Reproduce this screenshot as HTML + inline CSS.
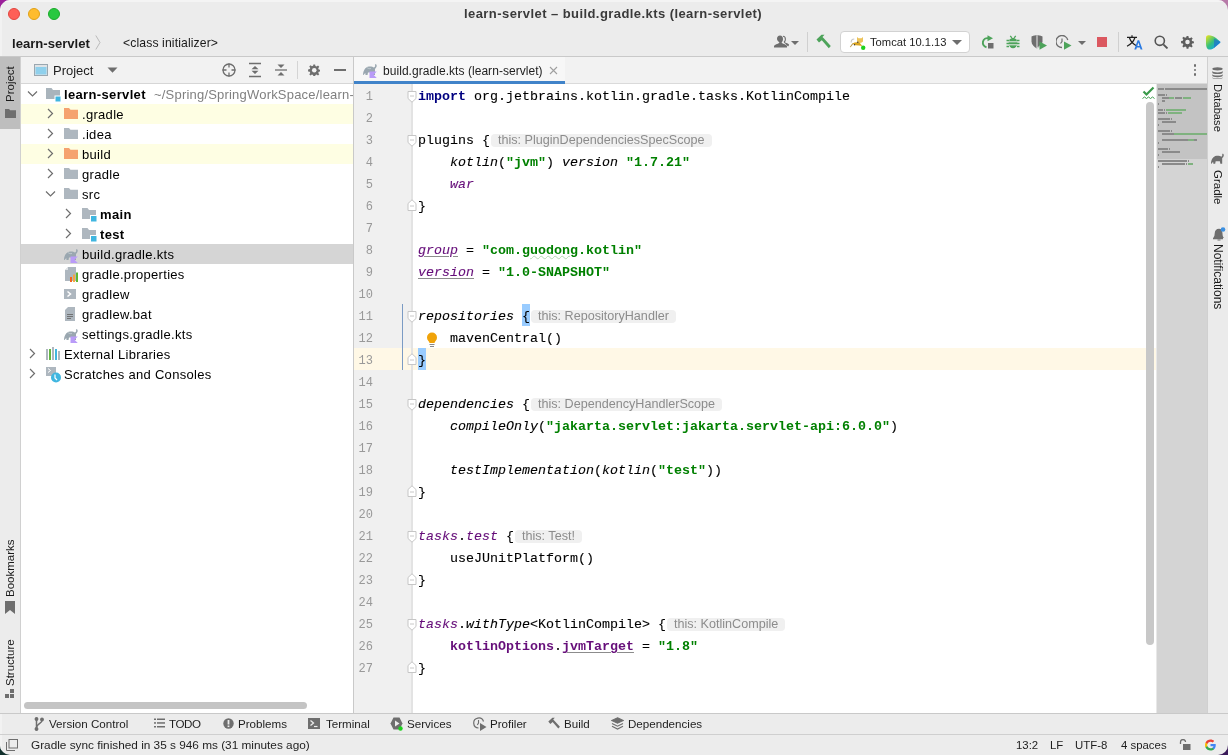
<!DOCTYPE html>
<html><head><meta charset="utf-8">
<style>
*{margin:0;padding:0;box-sizing:border-box}
html,body{width:1228px;height:755px;overflow:hidden;background:#7a2a7a}
body{font-family:"Liberation Sans",sans-serif;color:#000;position:relative}
.a{position:absolute}
#win{position:absolute;left:0;top:0;width:1228px;height:755px;background:#ececec;border-radius:10px;overflow:hidden;will-change:transform}
.t{position:absolute;white-space:pre;line-height:1}
.mono{font-family:"Liberation Mono",monospace}
/* editor code */
.ln{position:absolute;left:354px;width:19px;text-align:right;font-family:"Liberation Mono",monospace;font-size:12px;color:#999;white-space:pre;line-height:22px;height:22px;padding-top:2px}
.cl{position:absolute;left:418px;-webkit-text-stroke:0.1px currentColor;font-family:"Liberation Mono",monospace;font-size:13.33px;white-space:pre;color:#000;height:22px;line-height:22px;padding-top:2px}
.b{font-weight:bold}.str,.kw,.b{-webkit-text-stroke:0}.ul{text-decoration:underline;text-decoration-color:#8c8c8c;text-underline-offset:2px}.br{background:#99ccff;display:inline-block;height:22px;margin-top:-2px;padding-top:2px;vertical-align:top}
.wavy{text-decoration:underline wavy #b5d9b5;text-decoration-thickness:1px}
.kw{color:#000080;font-weight:bold}
.str{color:#008000;font-weight:bold}
.it{font-style:italic}
.pu{color:#660e7a}
.hint{display:inline-block;-webkit-text-stroke:0;font-family:"Liberation Sans",sans-serif;font-size:12.6px;color:#8c8c8c;font-weight:normal;font-style:normal;background:#f0f0f0;border-radius:4px;padding:0 7px 0 7px;line-height:13px;height:13px;vertical-align:0.5px;margin-left:1px}
.row{position:absolute;left:21px;width:332px;height:20px}
.tx{position:absolute;font-size:13px;white-space:pre;line-height:14px;margin-top:1px}
</style></head><body>
<div class="a" style="left:0;top:0;width:30px;height:30px;background:#9a1f9a"></div><div class="a" style="right:0;top:0;width:30px;height:30px;background:#b77aa8"></div><div class="a" style="left:0;bottom:0;width:30px;height:30px;background:#10302c"></div><div class="a" style="right:0;bottom:0;width:30px;height:30px;background:#3a1a5a"></div>
<div id="win">
<!-- title bar -->
<div class="a" style="left:0;top:0;width:1228px;height:1.5px;background:#f4f4f4"></div>
<div class="a" style="left:0;top:0;width:1.5px;height:755px;background:#f2f2f2"></div>
<div class="a" style="left:8px;top:8px;width:12px;height:12px;border-radius:50%;background:#fe5f57;border:0.5px solid #e2463f"></div>
<div class="a" style="left:28px;top:8px;width:12px;height:12px;border-radius:50%;background:#febc2e;border:0.5px solid #e1a116"></div>
<div class="a" style="left:48px;top:8px;width:12px;height:12px;border-radius:50%;background:#28c840;border:0.5px solid #1aab29"></div>
<div class="t" style="left:464px;top:7px;font-size:13px;letter-spacing:0.43px;font-weight:bold;color:#3a3a3a">learn-servlet – build.gradle.kts (learn-servlet)</div>

<!-- nav bar -->
<div class="t" style="left:12px;top:36.5px;font-size:13.1px;font-weight:bold;color:#1a1a1a">learn-servlet</div>
<div class="t" style="left:123px;top:37px;font-size:12.2px;letter-spacing:0.12px;color:#1a1a1a">&lt;class initializer&gt;</div>

<!-- nav chevron -->
<svg class="a" style="left:95px;top:35px" width="6" height="15" viewBox="0 0 6 15"><path d="M0.8 0.5L5 7.5 0.8 14.5" fill="none" stroke="#b4b4b4" stroke-width="0.9"/></svg>
<!-- user icon -->
<svg class="a" style="left:774px;top:35px" width="15" height="13" viewBox="0 0 15 13"><path d="M9 1.2c1.6 0 2.4 1.3 2.4 3 0 1.2-.5 2.2-1.1 2.8.1.7.9 1 2 1.5.9.4 1.8.8 2.3 1.3l-.6.8c-.5-.5-1.2-.8-2-1.2" fill="none" stroke="#6e6e6e" stroke-width="1.1"/><path d="M6 0.5c1.9 0 3 1.5 3 3.5 0 1.5-.6 2.7-1.4 3.3.1.8 1 1.3 2.5 1.8 1.5.5 2.6 1.2 2.9 2.2V12.5H0v-1.2c.3-1 1.4-1.7 2.9-2.2C4.4 8.6 5.3 8.1 5.4 7.3 4.6 6.7 3 5.5 3 4c0-2 1.1-3.5 3-3.5z" fill="#6e6e6e"/></svg>
<svg class="a" style="left:791px;top:41px" width="8" height="4" viewBox="0 0 8 4"><path d="M0 0h8L4 4z" fill="#6e6e6e"/></svg>
<div class="a" style="left:807px;top:32px;width:1px;height:20px;background:#d0d0d0"></div>
<!-- hammer -->
<svg class="a" style="left:815px;top:34px" width="17" height="16" viewBox="0 0 17 16"><path d="M1.5 5.5L6.5 0.8 9.5 0.8 7.5 3 9 4.5 15.8 12 13.8 14.2 6.8 6.2 4 8.5z" fill="#4da35a"/></svg>
<!-- run config combo -->
<div class="a" style="left:840px;top:31px;width:130px;height:22px;background:#fff;border:1px solid #d2d2d2;border-radius:4px"></div>
<svg class="a" style="left:846px;top:33px" width="24" height="18" viewBox="0 0 24 18"><path d="M5.2 9.5Q5 6.2 8.3 6" fill="none" stroke="#c8c8c8" stroke-width="1.1"/><path d="M11 4L12.5 5.3H15.5L17 4V8.6Q16 10 14 10Q12 10 11 8.6Z" fill="#ecc35a"/><path d="M6.3 10.6Q10 8.3 13.5 9.6L16.3 13Q12.5 12.2 9 12.3Z" fill="#d9a41e"/><path d="M3.8 14L6.4 10.3 7.3 10.9 4.6 14.3Z" fill="#b89850"/><circle cx="11.8" cy="9.3" r=".7" fill="#333"/><circle cx="8.5" cy="11.7" r=".7" fill="#333"/><circle cx="17.2" cy="14.8" r="2.2" fill="#1ed21e"/></svg>
<div class="t" style="left:870px;top:37px;font-size:11.2px;color:#1e1e1e">Tomcat 10.1.13</div>
<svg class="a" style="left:952px;top:40px" width="10" height="5" viewBox="0 0 10 5"><path d="M0 0h10L5 5z" fill="#6e6e6e"/></svg>
<!-- rerun -->
<svg class="a" style="left:980px;top:35px" width="15" height="14" viewBox="0 0 15 14"><path d="M8.5 3.2A4.6 4.6 0 1 0 6.5 12.3" fill="none" stroke="#4da35a" stroke-width="1.9"/><path d="M7.5 0.3L13 3.3 7.5 6.3z" fill="#4da35a"/><rect x="8" y="8" width="5.5" height="5.5" fill="#6e6e6e"/></svg>
<!-- debug -->
<svg class="a" style="left:1006px;top:35px" width="14" height="14" viewBox="0 0 14 14"><path d="M4.3 0.8l1.5 2M9.7 0.8L8.2 2.8" stroke="#4da35a" stroke-width="1.3"/><ellipse cx="7" cy="8" rx="4.3" ry="5.3" fill="#4da35a"/><path d="M0.5 5.5h2.5M11 5.5h2.5M0.5 8.5h2.5M11 8.5h2.5M0.5 11.5h2.5M11 11.5h2.5" stroke="#4da35a" stroke-width="1.4"/><path d="M3 6.8h8M3 9.8h8" stroke="#ececec" stroke-width="1"/></svg>
<!-- coverage -->
<svg class="a" style="left:1031px;top:35px" width="17" height="15" viewBox="0 0 17 15"><path d="M0.5 1.5C3 0.5 4.5 0.3 6 0.3s3 .2 5.5 1.2v5c0 3-2.5 5.5-5.5 7C3 12 .5 9.5.5 6.5z" fill="#6e6e6e"/><path d="M6 0.3v13c1.5-1 2.5-2 3.5-3" fill="none" stroke="#ececec" stroke-width="1"/><path d="M8.5 6.5v8.3l7.5-4.2z" fill="#4da35a"/></svg>
<!-- profiler -->
<svg class="a" style="left:1056px;top:35px" width="16" height="15" viewBox="0 0 16 15"><path d="M11.8 5A6 6 0 1 0 6 12.5" fill="none" stroke="#6e6e6e" stroke-width="1.3"/><path d="M6 3.5v3l-1.5 2" fill="none" stroke="#6e6e6e" stroke-width="1.2"/><path d="M8 6.5v8.3l7.5-4.2z" fill="#4da35a"/></svg>
<svg class="a" style="left:1078px;top:41px" width="8" height="4" viewBox="0 0 8 4"><path d="M0 0h8L4 4z" fill="#6e6e6e"/></svg>
<!-- stop -->
<div class="a" style="left:1097px;top:37px;width:10px;height:10px;background:#db5860"></div>
<div class="a" style="left:1118px;top:32px;width:1px;height:20px;background:#d0d0d0"></div>
<!-- translate -->
<svg class="a" style="left:1126px;top:35px" width="18" height="15" viewBox="0 0 18 15"><path d="M6 0.3v1.6M1 2.3h10M3.3 2.5C4.5 6 6.5 9 11 11M9 2.5C7.8 6 5.5 9 1 11.2" fill="none" stroke="#1e1e1e" stroke-width="1.2"/><path d="M8.3 14.5L11.6 5.3h1.6l3.3 9.2h-1.9l-.7-2.1h-3l-.7 2.1zM11.3 11h2.2l-1.1-3.4z" fill="#2a7ae2"/></svg>

<!-- search -->
<svg class="a" style="left:1154px;top:35px" width="15" height="14" viewBox="0 0 15 14"><circle cx="5.8" cy="5.8" r="4.6" fill="none" stroke="#555" stroke-width="1.6"/><path d="M9.3 9.3l4.2 4.2" stroke="#555" stroke-width="1.8"/></svg>
<!-- gear -->
<svg class="a" style="left:1181px;top:35px" width="13" height="14" viewBox="0 0 16 16"><path fill="#5e5e5e" d="M6.9 0.5h2.2l.4 2.2 1.5.6 1.8-1.3 1.6 1.6-1.3 1.8.6 1.5 2.2.4v2.2l-2.2.4-.6 1.5 1.3 1.8-1.6 1.6-1.8-1.3-1.5.6-.4 2.2H6.9l-.4-2.2-1.5-.6-1.8 1.3-1.6-1.6 1.3-1.8-.6-1.5-2.2-.4V6.9l2.2-.4.6-1.5-1.3-1.8 1.6-1.6 1.8 1.3 1.5-.6z"/><circle cx="8" cy="8" r="2.8" fill="#ececec"/></svg>
<!-- jetbrains logo -->
<svg class="a" style="left:1205px;top:34px" width="16" height="16" viewBox="0 0 16 16"><defs><linearGradient id="jg" x1="0" y1="0" x2="1" y2="1"><stop offset="0" stop-color="#f2e41a"/><stop offset=".45" stop-color="#36c07b"/><stop offset=".75" stop-color="#17a8d8"/><stop offset="1" stop-color="#2060d8"/></linearGradient></defs><path d="M2.5 1.5C5 1 8 2 11 4l4 3.5c.5.4.5 1 0 1.4L9 14c-2 1.5-4.5 2-6 1.2C1.5 14 1 12 1 9.5V4c0-1.5.5-2.3 1.5-2.5z" fill="url(#jg)"/><path d="M9 4.5l6 3c.5.3.5.8 0 1.2L9 14z" fill="#1f5fcf" opacity=".55"/></svg>

<!-- border under toolbar -->
<div class="a" style="left:0;top:56px;width:1228px;height:1px;background:#c9c9c9"></div>

<!-- left tool strip -->
<div class="a" style="left:0;top:57px;width:21px;height:656px;background:#ececec;border-right:1px solid #d0d0d0"></div>

<!-- project panel -->
<div class="a" style="left:21px;top:57px;width:332px;height:26px;background:#f2f2f2"></div>
<div class="a" style="left:21px;top:83px;width:332px;height:1px;background:#d6d6d6"></div>
<div class="a" style="left:21px;top:84px;width:332px;height:629px;background:#fff"></div>
<div class="a" style="left:353px;top:57px;width:1px;height:656px;background:#c9c9c9"></div>
<!-- project panel header -->
<svg class="a" style="left:34px;top:63px" width="14" height="14" viewBox="0 0 14 14"><rect x="0.5" y="1.5" width="13" height="11" fill="#dfe3e6" stroke="#9aa7b0"/><rect x="1.5" y="4" width="11" height="7.5" fill="#8fd0ec"/></svg>
<div class="t" style="left:53px;top:64px;font-size:13px;letter-spacing:0px;color:#1e1e1e">Project</div>
<svg class="a" style="left:107px;top:67px" width="11" height="6" viewBox="0 0 11 6"><path d="M0.5 0.5h10L5.5 5.8z" fill="#6e6e6e"/></svg>
<!-- locate -->
<svg class="a" style="left:221px;top:62px" width="16" height="16" viewBox="0 0 16 16" fill="none" stroke="#6e6e6e" stroke-width="1.3"><circle cx="8" cy="8" r="6"/><path d="M8 1.5v4M8 10.5v4M1.5 8h4M10.5 8h4"/></svg>
<!-- expand all -->
<svg class="a" style="left:248px;top:62px" width="14" height="16" viewBox="0 0 14 16"><path d="M1 1.5h12M1 14.5h12" stroke="#6e6e6e" stroke-width="1.3"/><path d="M3.5 7.3L7 4l3.5 3.3z M3.5 8.7L7 12l3.5-3.3z" fill="#6e6e6e"/></svg>
<!-- collapse all -->
<svg class="a" style="left:274px;top:62px" width="14" height="16" viewBox="0 0 14 16"><path d="M1 8h12" stroke="#6e6e6e" stroke-width="1.3"/><path d="M3.5 2.5h7L7 6z M3.5 13.5h7L7 10z" fill="#6e6e6e"/></svg>
<div class="a" style="left:297px;top:61px;width:1px;height:18px;background:#d4d4d4"></div>
<!-- gear -->
<svg class="a" style="left:307.5px;top:63.5px" width="12.5" height="12.5" viewBox="0 0 16 16"><path fill="#6e6e6e" d="M6.9 0.5h2.2l.4 2.2 1.5.6 1.8-1.3 1.6 1.6-1.3 1.8.6 1.5 2.2.4v2.2l-2.2.4-.6 1.5 1.3 1.8-1.6 1.6-1.8-1.3-1.5.6-.4 2.2H6.9l-.4-2.2-1.5-.6-1.8 1.3-1.6-1.6 1.3-1.8-.6-1.5-2.2-.4V6.9l2.2-.4.6-1.5-1.3-1.8 1.6-1.6 1.8 1.3 1.5-.6z"/><circle cx="8" cy="8" r="2.9" fill="#f2f2f2"/></svg>
<div class="a" style="left:334px;top:69px;width:12px;height:1.6px;background:#6e6e6e"></div>

<!-- tree rows -->
<div class="a" style="left:21px;top:104px;width:332px;height:20px;background:#fefee3"></div>
<div class="a" style="left:21px;top:144px;width:332px;height:20px;background:#fefee3"></div>
<div class="a" style="left:21px;top:244px;width:332px;height:20px;background:#d5d5d5"></div>

<!-- row0 learn-servlet -->
<svg class="a" style="left:27px;top:90px" width="11" height="8" viewBox="0 0 11 8" fill="none" stroke="#6e6e6e" stroke-width="1.2"><path d="M1 1.5l4.5 4.5L10 1.5"/></svg>
<svg class="a" style="left:46px;top:88px" width="16" height="15" viewBox="0 0 16 15"><path d="M0 0h5.5l1.5 2h7v9H0z" fill="#9aa7b0" opacity=".85"/><rect x="9" y="8" width="6" height="6" fill="#40b6e0" stroke="#fff" stroke-width="1"/></svg>
<div class="tx" style="left:64px;top:87px;font-weight:bold;letter-spacing:0.35px;color:#000">learn-servlet</div>
<div class="tx" style="left:154px;top:87px;color:#808080;letter-spacing:0.2px;width:199px;overflow:hidden">~/Spring/SpringWorkSpace/learn-servlet</div>

<!-- row1 .gradle -->
<svg class="a" style="left:47px;top:108px" width="7" height="11" viewBox="0 0 7 11" fill="none" stroke="#6e6e6e" stroke-width="1.2"><path d="M1 1l4.5 4.5L1 10"/></svg>
<svg class="a" style="left:64px;top:108px" width="14" height="11" viewBox="0 0 14 11"><path d="M0 0h5l1.5 1.8H14V11H0z" fill="#f5a26f"/></svg>
<div class="tx" style="left:82px;top:107px;letter-spacing:0.3px">.gradle</div>
<!-- row2 .idea -->
<svg class="a" style="left:47px;top:128px" width="7" height="11" viewBox="0 0 7 11" fill="none" stroke="#6e6e6e" stroke-width="1.2"><path d="M1 1l4.5 4.5L1 10"/></svg>
<svg class="a" style="left:64px;top:128px" width="14" height="11" viewBox="0 0 14 11"><path d="M0 0h5l1.5 1.8H14V11H0z" fill="#aeb7bf"/></svg>
<div class="tx" style="left:82px;top:127px;letter-spacing:0.3px">.idea</div>
<!-- row3 build -->
<svg class="a" style="left:47px;top:148px" width="7" height="11" viewBox="0 0 7 11" fill="none" stroke="#6e6e6e" stroke-width="1.2"><path d="M1 1l4.5 4.5L1 10"/></svg>
<svg class="a" style="left:64px;top:148px" width="14" height="11" viewBox="0 0 14 11"><path d="M0 0h5l1.5 1.8H14V11H0z" fill="#f5a26f"/></svg>
<div class="tx" style="left:82px;top:147px;letter-spacing:0.3px">build</div>
<!-- row4 gradle -->
<svg class="a" style="left:47px;top:168px" width="7" height="11" viewBox="0 0 7 11" fill="none" stroke="#6e6e6e" stroke-width="1.2"><path d="M1 1l4.5 4.5L1 10"/></svg>
<svg class="a" style="left:64px;top:168px" width="14" height="11" viewBox="0 0 14 11"><path d="M0 0h5l1.5 1.8H14V11H0z" fill="#aeb7bf"/></svg>
<div class="tx" style="left:82px;top:167px;letter-spacing:0.3px">gradle</div>
<!-- row5 src -->
<svg class="a" style="left:45px;top:190px" width="11" height="8" viewBox="0 0 11 8" fill="none" stroke="#6e6e6e" stroke-width="1.2"><path d="M1 1.5l4.5 4.5L10 1.5"/></svg>
<svg class="a" style="left:64px;top:188px" width="14" height="11" viewBox="0 0 14 11"><path d="M0 0h5l1.5 1.8H14V11H0z" fill="#aeb7bf"/></svg>
<div class="tx" style="left:82px;top:187px;letter-spacing:0.3px">src</div>
<!-- row6 main -->
<svg class="a" style="left:65px;top:208px" width="7" height="11" viewBox="0 0 7 11" fill="none" stroke="#6e6e6e" stroke-width="1.2"><path d="M1 1l4.5 4.5L1 10"/></svg>
<svg class="a" style="left:82px;top:208px" width="16" height="15" viewBox="0 0 16 15"><path d="M0 0h5.5l1.5 2h7v9H0z" fill="#aeb7bf"/><rect x="8.5" y="7.5" width="6.5" height="6.5" fill="#40b6e0" stroke="#fff" stroke-width="1"/></svg>
<div class="tx" style="left:100px;top:207px;font-weight:bold;letter-spacing:0.35px">main</div>
<!-- row7 test -->
<svg class="a" style="left:65px;top:228px" width="7" height="11" viewBox="0 0 7 11" fill="none" stroke="#6e6e6e" stroke-width="1.2"><path d="M1 1l4.5 4.5L1 10"/></svg>
<svg class="a" style="left:82px;top:228px" width="16" height="15" viewBox="0 0 16 15"><path d="M0 0h5.5l1.5 2h7v9H0z" fill="#aeb7bf"/><rect x="8.5" y="7.5" width="6.5" height="6.5" fill="#40b6e0" stroke="#fff" stroke-width="1"/></svg>
<div class="tx" style="left:100px;top:227px;font-weight:bold;letter-spacing:0.35px">test</div>
<!-- row8 build.gradle.kts -->
<svg class="a" style="left:63px;top:247px" width="16" height="16" viewBox="0 0 16 16"><path d="M1 13C1 9 3 5 7 4.5 9 4.2 11 4.8 12 5.5 13 5 13.5 4 13 3 12.7 2.4 13.6 1.9 14.3 2.6 15.2 3.6 14.6 5.8 13 7V13H11L10.5 10.5H6L5.5 13H3.5L3.3 11C2.6 11.8 2 12.5 1.5 13Z" fill="#9aa7b0"/><path d="M5 5.5c1 1 2.5 1.5 4 1" fill="none" stroke="#c8d0d6" stroke-width=".8"/><path d="M7.5 9.5H14.8L11.5 12.7 14.8 15.9H7.5Z" fill="#b99bf8"/></svg>
<div class="tx" style="left:82px;top:247px;letter-spacing:0.3px">build.gradle.kts</div>
<!-- row9 gradle.properties -->
<svg class="a" style="left:65px;top:267px" width="14" height="16" viewBox="0 0 14 16"><path d="M0 3l3-3h8v14H0z" fill="#aeb7bf"/><path d="M0 3h3V0z" fill="#fff" opacity=".6"/><rect x="5" y="10" width="2" height="5" fill="#f26522"/><rect x="8" y="7.5" width="2" height="7.5" fill="#f5a742"/><rect x="11" y="5.5" width="2" height="9.5" fill="#5fb832"/></svg>
<div class="tx" style="left:82px;top:267px;letter-spacing:0.3px">gradle.properties</div>
<!-- row10 gradlew -->
<svg class="a" style="left:64px;top:289px" width="13" height="11" viewBox="0 0 13 11"><rect width="12" height="10" fill="#aeb7bf"/><path d="M3.5 2.5L6.5 5 3.5 7.5" stroke="#fff" stroke-width="1.5" fill="none"/></svg>
<div class="tx" style="left:82px;top:287px;letter-spacing:0.3px">gradlew</div>
<!-- row11 gradlew.bat -->
<svg class="a" style="left:65px;top:307px" width="12" height="15" viewBox="0 0 12 15"><path d="M0 3l3-3h7v14H0z" fill="#aeb7bf"/><path d="M2 7.5h6M2 9.5h6M2 11.5h4" stroke="#6a6a6a" stroke-width=".9"/></svg>
<div class="tx" style="left:82px;top:307px;letter-spacing:0.3px">gradlew.bat</div>
<!-- row12 settings.gradle.kts -->
<svg class="a" style="left:63px;top:327px" width="16" height="16" viewBox="0 0 16 16"><path d="M1 13C1 9 3 5 7 4.5 9 4.2 11 4.8 12 5.5 13 5 13.5 4 13 3 12.7 2.4 13.6 1.9 14.3 2.6 15.2 3.6 14.6 5.8 13 7V13H11L10.5 10.5H6L5.5 13H3.5L3.3 11C2.6 11.8 2 12.5 1.5 13Z" fill="#9aa7b0"/><path d="M5 5.5c1 1 2.5 1.5 4 1" fill="none" stroke="#c8d0d6" stroke-width=".8"/><path d="M7.5 9.5H14.8L11.5 12.7 14.8 15.9H7.5Z" fill="#b99bf8"/></svg>
<div class="tx" style="left:82px;top:327px;letter-spacing:0.3px">settings.gradle.kts</div>
<!-- row13 External Libraries -->
<svg class="a" style="left:29px;top:348px" width="7" height="11" viewBox="0 0 7 11" fill="none" stroke="#6e6e6e" stroke-width="1.2"><path d="M1 1l4.5 4.5L1 10"/></svg>
<svg class="a" style="left:46px;top:347px" width="14" height="13" viewBox="0 0 14 13"><rect x="0" y="2" width="2" height="11" fill="#aeb7bf"/><rect x="3" y="2" width="2" height="11" fill="#62b543"/><rect x="6" y="0" width="2" height="13" fill="#aeb7bf"/><rect x="9" y="2" width="2" height="11" fill="#40b6e0"/><rect x="12" y="4" width="2" height="9" fill="#aeb7bf"/></svg>
<div class="tx" style="left:64px;top:347px;letter-spacing:0.3px">External Libraries</div>
<!-- row14 Scratches -->
<svg class="a" style="left:29px;top:368px" width="7" height="11" viewBox="0 0 7 11" fill="none" stroke="#6e6e6e" stroke-width="1.2"><path d="M1 1l4.5 4.5L1 10"/></svg>
<svg class="a" style="left:46px;top:367px" width="16" height="16" viewBox="0 0 16 16"><rect x="0" y="0" width="10" height="9" fill="#aeb7bf"/><path d="M2 1.5l2.5 2L2 5.5" stroke="#fff" stroke-width="1" fill="none"/><circle cx="10" cy="10.5" r="5" fill="#40b6e0"/><path d="M9 7.5v3.5l2 2" stroke="#fff" stroke-width="1.2" fill="none"/></svg>
<div class="tx" style="left:64px;top:367px;letter-spacing:0.3px">Scratches and Consoles</div>

<!-- h scrollbar -->
<div class="a" style="left:24px;top:702px;width:283px;height:7px;border-radius:4px;background:#c4c4c4"></div>


<!-- editor tabs -->
<div class="a" style="left:354px;top:57px;width:853px;height:27px;background:#f2f2f2"></div>
<!-- editor -->
<div class="a" style="left:354px;top:84px;width:58px;height:629px;background:#f0f0f0"></div>
<div class="a" style="left:412px;top:84px;width:795px;height:629px;background:#fff"></div>
<!--EDITOR START-->
<div class="a" style="left:354px;top:348px;width:802px;height:22px;background:#fff8e6"></div>
<div class="a" style="left:411px;top:84px;width:2px;height:629px;background:#e3e3e3"></div>
<div class="ln" style="top:84px">1</div>
<div class="cl" style="top:84px"><span class="kw">import</span> org.jetbrains.kotlin.gradle.tasks.KotlinCompile</div>
<div class="ln" style="top:106px">2</div>
<div class="ln" style="top:128px">3</div>
<div class="cl" style="top:128px">plugins {<span class="hint">this: PluginDependenciesSpecScope</span></div>
<div class="ln" style="top:150px">4</div>
<div class="cl" style="top:150px">    <span class="it">kotlin</span>(<span class="str">"jvm"</span>) <span class="it">version</span> <span class="str">"1.7.21"</span></div>
<div class="ln" style="top:172px">5</div>
<div class="cl" style="top:172px">    <span class="it pu">war</span></div>
<div class="ln" style="top:194px">6</div>
<div class="cl" style="top:194px">}</div>
<div class="ln" style="top:216px">7</div>
<div class="ln" style="top:238px">8</div>
<div class="cl" style="top:238px"><span class="it pu ul">group</span> = <span class="str">"com.<span class="wavy">guodong</span>.kotlin"</span></div>
<div class="ln" style="top:260px">9</div>
<div class="cl" style="top:260px"><span class="it pu ul">version</span> = <span class="str">"1.0-SNAPSHOT"</span></div>
<div class="ln" style="top:282px">10</div>
<div class="ln" style="top:304px">11</div>
<div class="cl" style="top:304px"><span class="it">repositories</span> <span class="br">{</span><span class="hint">this: RepositoryHandler</span></div>
<div class="ln" style="top:326px">12</div>
<div class="cl" style="top:326px">    mavenCentral()</div>
<div class="ln" style="top:348px">13</div>
<div class="cl" style="top:348px"><span class="br">}</span></div>
<div class="ln" style="top:370px">14</div>
<div class="ln" style="top:392px">15</div>
<div class="cl" style="top:392px"><span class="it">dependencies</span> {<span class="hint">this: DependencyHandlerScope</span></div>
<div class="ln" style="top:414px">16</div>
<div class="cl" style="top:414px">    <span class="it">compileOnly</span>(<span class="str">"jakarta.servlet:jakarta.servlet-api:6.0.0"</span>)</div>
<div class="ln" style="top:436px">17</div>
<div class="ln" style="top:458px">18</div>
<div class="cl" style="top:458px">    <span class="it">testImplementation</span>(<span class="it">kotlin</span>(<span class="str">"test"</span>))</div>
<div class="ln" style="top:480px">19</div>
<div class="cl" style="top:480px">}</div>
<div class="ln" style="top:502px">20</div>
<div class="ln" style="top:524px">21</div>
<div class="cl" style="top:524px"><span class="it pu">tasks</span>.<span class="it pu">test</span> {<span class="hint">this: Test!</span></div>
<div class="ln" style="top:546px">22</div>
<div class="cl" style="top:546px">    useJUnitPlatform()</div>
<div class="ln" style="top:568px">23</div>
<div class="cl" style="top:568px">}</div>
<div class="ln" style="top:590px">24</div>
<div class="ln" style="top:612px">25</div>
<div class="cl" style="top:612px"><span class="it pu">tasks</span>.<span class="it">withType</span>&lt;KotlinCompile&gt; {<span class="hint">this: KotlinCompile</span></div>
<div class="ln" style="top:634px">26</div>
<div class="cl" style="top:634px">    <span class="pu b">kotlinOptions</span>.<span class="pu b ul">jvmTarget</span> = <span class="str">"1.8"</span></div>
<div class="ln" style="top:656px">27</div>
<div class="cl" style="top:656px">}</div>
<svg class="a" style="left:407px;top:90.5px" width="10" height="12" viewBox="0 0 10 12"><path d="M1 0.5H9V7.5L5 11.2L1 7.5z" fill="#fff" stroke="#c6c6c6" stroke-width="1"/><path d="M3 5H7" stroke="#c8c8c8" stroke-width="1"/></svg>
<svg class="a" style="left:407px;top:134.5px" width="10" height="12" viewBox="0 0 10 12"><path d="M1 0.5H9V7.5L5 11.2L1 7.5z" fill="#fff" stroke="#c6c6c6" stroke-width="1"/><path d="M3 5H7" stroke="#c8c8c8" stroke-width="1"/></svg>
<svg class="a" style="left:407px;top:199px" width="10" height="12" viewBox="0 0 10 12"><path d="M1 11.5V4.5L5 0.8L9 4.5V11.5z" fill="#fff" stroke="#c6c6c6" stroke-width="1"/><path d="M3 7H7" stroke="#c8c8c8" stroke-width="1"/></svg>
<svg class="a" style="left:407px;top:310.5px" width="10" height="12" viewBox="0 0 10 12"><path d="M1 0.5H9V7.5L5 11.2L1 7.5z" fill="#fff" stroke="#c6c6c6" stroke-width="1"/><path d="M3 5H7" stroke="#c8c8c8" stroke-width="1"/></svg>
<svg class="a" style="left:407px;top:353px" width="10" height="12" viewBox="0 0 10 12"><path d="M1 11.5V4.5L5 0.8L9 4.5V11.5z" fill="#fff" stroke="#c6c6c6" stroke-width="1"/><path d="M3 7H7" stroke="#c8c8c8" stroke-width="1"/></svg>
<svg class="a" style="left:407px;top:398.5px" width="10" height="12" viewBox="0 0 10 12"><path d="M1 0.5H9V7.5L5 11.2L1 7.5z" fill="#fff" stroke="#c6c6c6" stroke-width="1"/><path d="M3 5H7" stroke="#c8c8c8" stroke-width="1"/></svg>
<svg class="a" style="left:407px;top:485px" width="10" height="12" viewBox="0 0 10 12"><path d="M1 11.5V4.5L5 0.8L9 4.5V11.5z" fill="#fff" stroke="#c6c6c6" stroke-width="1"/><path d="M3 7H7" stroke="#c8c8c8" stroke-width="1"/></svg>
<svg class="a" style="left:407px;top:530.5px" width="10" height="12" viewBox="0 0 10 12"><path d="M1 0.5H9V7.5L5 11.2L1 7.5z" fill="#fff" stroke="#c6c6c6" stroke-width="1"/><path d="M3 5H7" stroke="#c8c8c8" stroke-width="1"/></svg>
<svg class="a" style="left:407px;top:573px" width="10" height="12" viewBox="0 0 10 12"><path d="M1 11.5V4.5L5 0.8L9 4.5V11.5z" fill="#fff" stroke="#c6c6c6" stroke-width="1"/><path d="M3 7H7" stroke="#c8c8c8" stroke-width="1"/></svg>
<svg class="a" style="left:407px;top:618.5px" width="10" height="12" viewBox="0 0 10 12"><path d="M1 0.5H9V7.5L5 11.2L1 7.5z" fill="#fff" stroke="#c6c6c6" stroke-width="1"/><path d="M3 5H7" stroke="#c8c8c8" stroke-width="1"/></svg>
<svg class="a" style="left:407px;top:661px" width="10" height="12" viewBox="0 0 10 12"><path d="M1 11.5V4.5L5 0.8L9 4.5V11.5z" fill="#fff" stroke="#c6c6c6" stroke-width="1"/><path d="M3 7H7" stroke="#c8c8c8" stroke-width="1"/></svg>
<!--EDITOR END-->

<!-- right strip -->
<div class="a" style="left:1207px;top:57px;width:21px;height:656px;background:#ebebeb;border-left:1px solid #d0d0d0"></div>

<!-- editor tab -->
<div class="a" style="left:354px;top:57px;width:211px;height:24px;background:#f7f7f7"></div>
<div class="a" style="left:354px;top:83px;width:853px;height:1px;background:#dadada"></div>
<div class="a" style="left:354px;top:81px;width:211px;height:3px;background:#4083c9"></div>
<svg class="a" style="left:362px;top:62px" width="16" height="16" viewBox="0 0 16 16"><path d="M1 13C1 9 3 5 7 4.5 9 4.2 11 4.8 12 5.5 13 5 13.5 4 13 3 12.7 2.4 13.6 1.9 14.3 2.6 15.2 3.6 14.6 5.8 13 7V13H11L10.5 10.5H6L5.5 13H3.5L3.3 11C2.6 11.8 2 12.5 1.5 13Z" fill="#9aa7b0"/><path d="M5 5.5c1 1 2.5 1.5 4 1" fill="none" stroke="#c8d0d6" stroke-width=".8"/><path d="M7.5 9.5H14.8L11.5 12.7 14.8 15.9H7.5Z" fill="#b99bf8"/></svg>
<div class="t" style="left:383px;top:64.5px;font-size:12px;letter-spacing:0.05px;color:#1e1e1e">build.gradle.kts (learn-servlet)</div>
<svg class="a" style="left:549px;top:66px" width="9" height="9" viewBox="0 0 9 9" stroke="#a0a0a0" stroke-width="1.1"><path d="M1 1l7 7M8 1L1 8"/></svg>
<!-- more actions dots -->
<div class="a" style="left:1193.7px;top:64px;width:2.7px;height:2.7px;border-radius:50%;background:#6e6e6e"></div>
<div class="a" style="left:1193.7px;top:68.6px;width:2.7px;height:2.7px;border-radius:50%;background:#6e6e6e"></div>
<div class="a" style="left:1193.7px;top:73.2px;width:2.7px;height:2.7px;border-radius:50%;background:#6e6e6e"></div>

<!-- scope line -->
<div class="a" style="left:402px;top:304px;width:1px;height:66px;background:#7b9bc4"></div>
<!-- lightbulb -->
<svg class="a" style="left:426px;top:332px" width="12" height="16" viewBox="0 0 12 16"><circle cx="6" cy="5.5" r="5" fill="#f0a30a"/><path d="M2.5 8.5h7L8.5 11h-5z" fill="#f0a30a"/><path d="M3.5 12.5h5M4 14.5h4" stroke="#888" stroke-width="1"/></svg>

<!-- check mark -->
<svg class="a" style="left:1142px;top:86px" width="13" height="14" viewBox="0 0 13 14"><path d="M1.5 5.5l3 3L11.5 1.5" stroke="#3a9a4a" stroke-width="2.2" fill="none"/><path d="M0.5 12.5l2-1.5 2 1.5 2-1.5 2 1.5 2-1.5 2 1.5" stroke="#3a9a4a" stroke-width="1" fill="none"/></svg>
<!-- v scrollbar -->
<div class="a" style="left:1146px;top:102px;width:8px;height:543px;border-radius:4px;background:#c8c8c8"></div>
<!-- minimap -->
<div class="a" style="left:1157px;top:84px;width:50px;height:629px;background:#d4d4d4"></div>
<div class="a" style="left:1157px;top:84px;width:50px;height:75px;background:#c3c3c3"></div>
<div class="a" style="left:1156px;top:84px;width:1px;height:629px;background:#e8e8e8"></div>
<svg class="a" style="left:1157px;top:84px" width="50" height="90" viewBox="0 0 50 90">
<g fill="#8a8a8a">
<rect x="1" y="4" width="6" height="2"/><rect x="8" y="4" width="45" height="2"/>
<rect x="1" y="10" width="7" height="2"/><rect x="9" y="10" width="1" height="2"/>
<rect x="5" y="13" width="7" height="2"/><rect x="18" y="13" width="7" height="2"/>
<rect x="5" y="16" width="3" height="2"/>
<rect x="1" y="19" width="1" height="2"/>
<rect x="1" y="25" width="5" height="2"/><rect x="7" y="25" width="1" height="2"/>
<rect x="1" y="28" width="7" height="2"/><rect x="9" y="28" width="1" height="2"/>
<rect x="1" y="34" width="12" height="2"/><rect x="14" y="34" width="1" height="2"/>
<rect x="5" y="37" width="14" height="2"/>
<rect x="1" y="40" width="1" height="2"/>
<rect x="1" y="46" width="12" height="2"/><rect x="14" y="46" width="1" height="2"/>
<rect x="5" y="49" width="12" height="2"/>
<rect x="5" y="55" width="26" height="2"/><rect x="37" y="55" width="3" height="2"/>
<rect x="1" y="58" width="1" height="2"/>
<rect x="1" y="64" width="10" height="2"/><rect x="12" y="64" width="1" height="2"/>
<rect x="5" y="67" width="18" height="2"/>
<rect x="1" y="70" width="1" height="2"/>
<rect x="1" y="76" width="29" height="2"/><rect x="31" y="76" width="1" height="2"/>
<rect x="5" y="79" width="23" height="2"/><rect x="29" y="79" width="1" height="2"/>
<rect x="1" y="82" width="1" height="2"/>
</g>
<g fill="#7fb27f">
<rect x="12" y="13" width="5" height="2"/><rect x="26" y="13" width="8" height="2"/>
<rect x="9" y="25" width="20" height="2"/><rect x="11" y="28" width="14" height="2"/>
<rect x="17" y="49" width="36" height="2"/>
<rect x="31" y="55" width="6" height="2"/>
<rect x="31" y="79" width="5" height="2"/>
</g>
</svg>

<!-- left tool strip contents -->
<div class="a" style="left:0;top:57px;width:20px;height:72px;background:#bebebe"></div>
<div class="t" style="left:5px;top:102px;font-size:11.5px;color:#1a1a1a;transform-origin:0 0;transform:rotate(-90deg)">Project</div>
<svg class="a" style="left:5px;top:109px" width="11" height="9" viewBox="0 0 11 9"><path d="M0 0h4l1.2 1.2H11V9H0z" fill="#6e6e6e"/></svg>
<div class="t" style="left:5px;top:597px;font-size:11.5px;color:#1a1a1a;transform-origin:0 0;transform:rotate(-90deg)">Bookmarks</div>
<svg class="a" style="left:5px;top:601px" width="10" height="13" viewBox="0 0 10 13"><path d="M0 0h10v13L5 9 0 13z" fill="#6e6e6e"/></svg>
<div class="t" style="left:5px;top:685.5px;font-size:11.5px;color:#1a1a1a;transform-origin:0 0;transform:rotate(-90deg)">Structure</div>
<svg class="a" style="left:5px;top:689px" width="11" height="11" viewBox="0 0 11 11" fill="#6e6e6e"><rect x="5" y="0" width="4" height="4"/><rect x="0" y="5" width="4" height="4"/><rect x="5" y="5" width="4" height="4"/></svg>

<!-- right tool strip contents -->
<svg class="a" style="left:1212px;top:67px" width="11" height="12" viewBox="0 0 11 12"><ellipse cx="5.5" cy="1.8" rx="5.2" ry="1.6" fill="#6e6e6e"/><path d="M0.3 3.8c0 .9 2.3 1.6 5.2 1.6s5.2-.7 5.2-1.6v1.6c0 .9-2.3 1.6-5.2 1.6S.3 6.3.3 5.4zM0.3 7c0 .9 2.3 1.6 5.2 1.6s5.2-.7 5.2-1.6v1.6c0 .9-2.3 1.6-5.2 1.6S.3 9.5.3 8.6zM0.3 10c0 .9 2.3 1.6 5.2 1.6s5.2-.7 5.2-1.6v.4c0 .9-2.3 1.6-5.2 1.6S.3 11.3.3 10.4z" fill="#6e6e6e"/></svg>
<div class="t" style="left:1223.3px;top:84px;font-size:11.2px;color:#1a1a1a;transform-origin:0 0;transform:rotate(90deg)">Database</div>
<svg class="a" style="left:1211px;top:153px" width="14" height="12" viewBox="1 2 15 12"><path d="M1 13C1 9 3 5 7 4.5 9 4.2 11 4.8 12 5.5 13 5 13.5 4 13 3 12.7 2.4 13.6 1.9 14.3 2.6 15.2 3.6 14.6 5.8 13 7V13H11L10.5 10.5H6L5.5 13H3.5L3.3 11C2.6 11.8 2 12.5 1.5 13Z" fill="#6e6e6e"/></svg>
<div class="t" style="left:1223.3px;top:169.5px;font-size:11.5px;color:#1a1a1a;transform-origin:0 0;transform:rotate(90deg)">Gradle</div>
<svg class="a" style="left:1212px;top:227px" width="14" height="14" viewBox="0 0 14 14"><path d="M2 11c1-1 1.5-2 1.5-4.5C3.5 4 5 2.5 7 2.5c1 0 1.8.3 2.3.8" fill="none" stroke="#6e6e6e" stroke-width="1.6"/><path d="M1 11.5h10" stroke="#6e6e6e" stroke-width="1.5"/><path d="M5.5 13h3" stroke="#6e6e6e" stroke-width="1.2"/><path d="M2 11c1-1 1.5-2 1.5-4.5C3.5 4 5 2.5 7 2.5S10.5 4 10.5 6.5c0 2.5.5 3.5 1.5 4.5z" fill="#6e6e6e"/><circle cx="11" cy="2.5" r="2.3" fill="#3b8fe0"/></svg>
<div class="t" style="left:1223.6px;top:244px;font-size:12px;color:#1a1a1a;transform-origin:0 0;transform:rotate(90deg)">Notifications</div>

<!-- bottom tool bar -->
<div class="a" style="left:0;top:713px;width:1228px;height:1px;background:#c9c9c9"></div>
<div class="a" style="left:0;top:734px;width:1228px;height:1px;background:#cfcfcf"></div>
<!-- bottom tool window bar -->
<svg class="a" style="left:34px;top:717px" width="10" height="14" viewBox="0 0 10 14" fill="none" stroke="#6e6e6e" stroke-width="1.5"><circle cx="2.5" cy="2" r="1.2" fill="#6e6e6e"/><path d="M2.5 3v9.5"/><circle cx="2.5" cy="12" r="1.2" fill="#6e6e6e"/><circle cx="8" cy="2.5" r="1.2" fill="#6e6e6e"/><path d="M8 3.5c0 3-5.5 3.5-5.5 7"/></svg>
<div class="t" style="left:49px;top:718px;font-size:11.6px;color:#1e1e1e">Version Control</div>
<svg class="a" style="left:154px;top:718px" width="11" height="10" viewBox="0 0 11 10" fill="#6e6e6e"><rect x="0" y="0.5" width="2" height="1.5"/><rect x="3" y="0.5" width="8" height="1.5"/><rect x="0" y="4.2" width="2" height="1.5"/><rect x="3" y="4.2" width="8" height="1.5"/><rect x="0" y="8" width="2" height="1.5"/><rect x="3" y="8" width="8" height="1.5"/></svg>
<div class="t" style="left:169px;top:718px;font-size:11.6px;color:#1e1e1e;letter-spacing:-0.4px">TODO</div>
<svg class="a" style="left:223px;top:718px" width="11" height="11" viewBox="0 0 11 11"><circle cx="5.5" cy="5.5" r="5.2" fill="#6e6e6e"/><rect x="4.6" y="2" width="1.8" height="4.5" fill="#ececec"/><rect x="4.6" y="7.5" width="1.8" height="1.6" fill="#ececec"/></svg>
<div class="t" style="left:238px;top:718px;font-size:11.6px;color:#1e1e1e">Problems</div>
<svg class="a" style="left:308px;top:718px" width="12" height="11" viewBox="0 0 12 11"><rect width="12" height="11" fill="#6e6e6e"/><path d="M2.5 2.5l3 2.5-3 2.5" stroke="#ececec" stroke-width="1.3" fill="none"/><path d="M6 8.5h3.5" stroke="#ececec" stroke-width="1.2"/></svg>
<div class="t" style="left:326px;top:718px;font-size:11.6px;color:#1e1e1e">Terminal</div>
<svg class="a" style="left:390px;top:717px" width="14" height="14" viewBox="0 0 14 14"><path d="M3.5 0.5h6l3 6-3 6h-6l-3-6z" fill="#6e6e6e"/><path d="M5 3.5v6l4.5-3z" fill="#ececec"/><circle cx="10.5" cy="11.5" r="2.2" fill="#1ed21e"/></svg>
<div class="t" style="left:407px;top:718px;font-size:11.6px;color:#1e1e1e">Services</div>
<svg class="a" style="left:473px;top:717px" width="14" height="14" viewBox="0 0 14 14"><path d="M10.5 4.5A5 5 0 1 0 5.5 11" fill="none" stroke="#6e6e6e" stroke-width="1.2"/><path d="M5.5 3v3L4.3 8" fill="none" stroke="#6e6e6e" stroke-width="1.1"/><path d="M7 6v8l6.5-4z" fill="#6e6e6e"/></svg>
<div class="t" style="left:490px;top:718px;font-size:11.6px;color:#1e1e1e">Profiler</div>
<svg class="a" style="left:547px;top:717px" width="14" height="13" viewBox="0 0 17 16"><path d="M1.5 5.5L6.5 0.8 9.5 0.8 7.5 3 9 4.5 15.8 12 13.8 14.2 6.8 6.2 4 8.5z" fill="#6e6e6e"/></svg>
<div class="t" style="left:564px;top:718px;font-size:11.6px;color:#1e1e1e">Build</div>
<svg class="a" style="left:611px;top:717px" width="13" height="13" viewBox="0 0 13 13" fill="none" stroke="#6e6e6e" stroke-width="1.2"><path d="M6.5 0.8L12 3.5 6.5 6.2 1 3.5z" fill="#6e6e6e"/><path d="M1 6.5l5.5 2.7L12 6.5M1 9.3l5.5 2.7L12 9.3"/></svg>
<div class="t" style="left:628px;top:718px;font-size:11.6px;color:#1e1e1e">Dependencies</div>

<!-- status bar -->
<svg class="a" style="left:6px;top:739px" width="12" height="12" viewBox="0 0 12 12" fill="none" stroke="#6e6e6e" stroke-width="1"><rect x="3" y="0.5" width="8.5" height="8.5"/><path d="M0.5 3v8.5H9"/></svg>
<div class="t" style="left:31px;top:740px;font-size:11.8px;color:#1e1e1e">Gradle sync finished in 35 s 946 ms (31 minutes ago)</div>
<div class="t" style="left:1016px;top:740.3px;font-size:11.4px;color:#1e1e1e">13:2</div>
<div class="t" style="left:1050px;top:740.3px;font-size:11.4px;color:#1e1e1e">LF</div>
<div class="t" style="left:1075px;top:740.3px;font-size:11.4px;color:#1e1e1e">UTF-8</div>
<div class="t" style="left:1121px;top:740.3px;font-size:11.4px;color:#1e1e1e">4 spaces</div>
<svg class="a" style="left:1179px;top:739px" width="12" height="11" viewBox="0 0 12 11"><path d="M1.5 5V3a2.5 2.5 0 0 1 5 0" fill="none" stroke="#6e6e6e" stroke-width="1.3"/><rect x="4" y="5" width="7.5" height="6" fill="#6e6e6e"/></svg>
<svg class="a" style="left:1204px;top:739px" width="13" height="12" viewBox="0 0 24 24"><path d="M22.5 12.3c0-.8-.1-1.5-.2-2.2H12v4.2h5.9c-.3 1.4-1 2.5-2.2 3.3v2.7h3.6c2-1.9 3.2-4.7 3.2-8z" fill="#4285f4"/><path d="M12 23c3 0 5.5-1 7.3-2.7l-3.6-2.7c-1 .7-2.2 1.1-3.7 1.1-2.9 0-5.3-1.9-6.2-4.5H2.1v2.8C3.9 20.6 7.7 23 12 23z" fill="#34a853"/><path d="M5.8 14.2c-.2-.7-.4-1.4-.4-2.2s.1-1.5.4-2.2V7H2.1C1.4 8.5 1 10.2 1 12s.4 3.5 1.1 5z" fill="#fbbc05"/><path d="M12 5.4c1.6 0 3.1.6 4.3 1.7l3.2-3.2C17.5 2.1 15 1 12 1 7.7 1 3.9 3.4 2.1 7l3.7 2.8C6.7 7.3 9.1 5.4 12 5.4z" fill="#ea4335"/></svg>


</div>
</body></html>
